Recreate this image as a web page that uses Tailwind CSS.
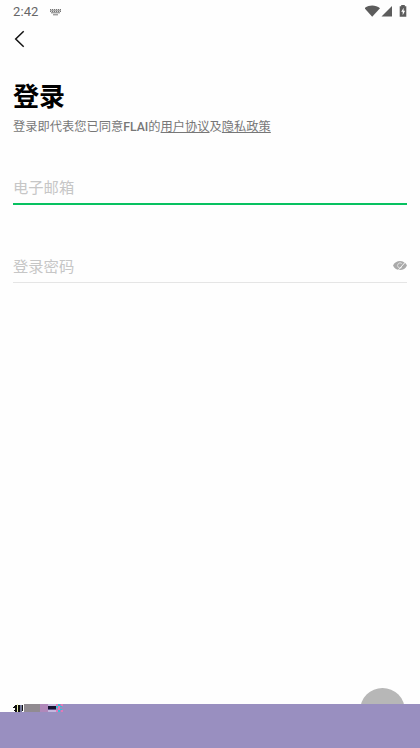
<!DOCTYPE html>
<html lang="zh-CN">
<head>
<meta charset="utf-8">
<meta name="viewport" content="width=device-width, initial-scale=1">
<title>登录</title>
<script src="https://cdn.jsdelivr.net/npm/@tailwindcss/browser@4"></script>
</head>
<body class="relative flex h-[748px] w-[420px] flex-col overflow-hidden bg-[#fefefe] font-[Roboto,'Noto_Sans_CJK_SC',sans-serif]">
  <header class="flex h-6 shrink-0 items-center pl-[13px] pr-[13px] text-[#666]">
    <span class="w-[37px] text-[13px] leading-6 tracking-[0.1px]">2:42</span>
    <svg class="h-[7px] w-[11px]" viewBox="0 0 11 7" fill="none" stroke="#777" stroke-width="1">
      <path d="M0 .5H11M0 2.5H11" stroke-dasharray="1.3 .7"/><path stroke="#aaa" d="M0 1.5H11"/><path d="M1 3.8H10M3 5.8H8"/>
    </svg>
    <div class="ml-auto flex h-full items-center pb-[2px]">
      <svg class="h-[12px] w-[42px]" viewBox="0 0 42 12" fill="#5c5c5c">
        <path d="M-.5 3.2C4-.5 10.500-.5 15 3.2L7.200 11.700Z"/>
        <path d="M27 1V11.500H16.500Z"/>
        <path d="M36.200 1.200V0H39.800V1.200H41.300V11.800H34.700V1.200Z"/>
        <path fill="#fff" d="M38.700 2.700L36.200 6.800H37.700V10.200L40.100 5.800H38.500Z"/>
      </svg>
    </div>
  </header>
  <nav class="flex h-8 shrink-0 items-center pl-[14px]">
    <svg class="h-[18px] w-[11px] -translate-y-px" viewBox="0 0 11 18" fill="none" stroke="#111" stroke-width="1.5"><path d="M9.700 1.300L1.700 9L9.700 16.700"/></svg>
  </nav>
  <main class="flex grow flex-col px-[13px]">
    <h1 class="mt-[23px] h-9 text-[26px] font-bold leading-9 text-black">登录</h1>
    <p class="mt-[2px] h-5 whitespace-nowrap text-[12.25px] leading-5 text-[#777]">登录即代表您已同意<span class="font-medium">FLAI</span>的<span class="underline decoration-1 underline-offset-1">用户协议</span>及<span class="underline decoration-1 underline-offset-1">隐私政策</span></p>
    <div class="mt-[37px] flex h-[31px] items-center border-b-2 border-[#07c160] text-[15.3px] text-[#c6c6c6]">电子邮箱</div>
    <div class="mt-[47px] flex h-[31px] items-center justify-between border-b border-[#e5e5e5] text-[15.3px] text-[#c6c6c6]">
      <span>登录密码</span>
      <svg class="h-[13px] w-[14px] -translate-y-[2px]" viewBox="0 0 14 13"><path fill="#aaa" d="M0 6.500C2.500.4 11.500.4 14 6.500C11.500 12.600 2.500 12.600 0 6.500Z"/><path d="M8.800 4.500A2.600 2.600 0 1 0 8.800 8.500" fill="none" stroke="#eee" stroke-width=".8"/><path d="M4.500 12L13.300 2" stroke="#fefefe" stroke-width=".9"/></svg>
    </div>
  </main>
  <div class="absolute left-[360px] top-[688px] size-[45px] rounded-full bg-[#b7b7b7]"></div>
  <footer class="absolute inset-x-0 top-[704px] h-11 bg-[#998fc0]">
    <svg class="block h-2 w-16" viewBox="0 0 64 8" shape-rendering="crispEdges">
      <path fill="#fefefe" d="M0 0H24V8H0Z"/>
      <path fill="#111" d="M14 2H15V1H17V8H15V7H14V6H15V4H13V3H14ZM18 1H20V8H18ZM22 1H23V7H22Z"/>
      <path fill="#eef3b0" d="M17 0H18V8H17Z"/><path fill="#777a99" d="M20 1H22V8H20Z"/>
      <path fill="#918b91" d="M24 0H40V8H24Z"/>
      <path fill="#b088ba" d="M40 0H48V8H40Z"/>
      <path fill="#c4b8df" d="M48 0H56V8H48Z"/><path fill="#15102e" d="M48 2H56V5H48Z"/><path fill="#5b5088" d="M48 5H56V6H48Z"/>
      <path fill="#998fc0" d="M56 0H64V8H56Z"/>
      <path fill="#e477b8" d="M56 0H58V2H56ZM58 2H60V6H58ZM56 6H58V8H56ZM61 0H63V2H61ZM61 6H63V8H61Z"/>
      <path fill="#35bfd8" d="M58 0H60V2H58ZM56 2H58V4H56ZM60 2H62V3H60ZM60 5H62V6H60ZM58 6H60V8H58Z"/>
    </svg>
  </footer>
</body>
</html>
